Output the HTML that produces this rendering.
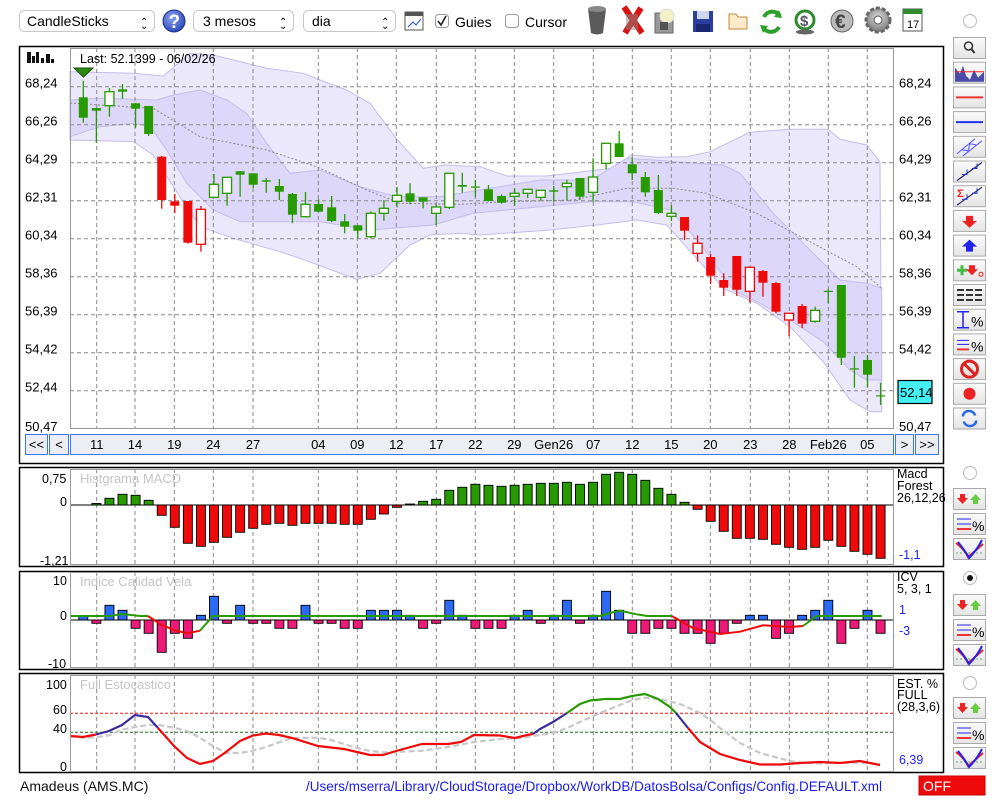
<!DOCTYPE html>
<html><head><meta charset="utf-8"><style>
html,body{margin:0;padding:0;background:#fff;width:1000px;height:800px;overflow:hidden}
svg{position:absolute;left:0;top:0;font-family:"Liberation Sans",sans-serif}
</style></head><body>
<svg id="s" width="1000" height="800" viewBox="0 0 1000 800" xmlns="http://www.w3.org/2000/svg">
<defs>
<linearGradient id="btn" x1="0" y1="0" x2="0" y2="1"><stop offset="0" stop-color="#fbfbfb"/><stop offset="1" stop-color="#e4e4e4"/></linearGradient>
<radialGradient id="help" cx="0.4" cy="0.35" r="0.7"><stop offset="0" stop-color="#8aa4f0"/><stop offset="1" stop-color="#2846b8"/></radialGradient>
<radialGradient id="gear" cx="0.5" cy="0.4" r="0.6"><stop offset="0" stop-color="#ddd"/><stop offset="1" stop-color="#777"/></radialGradient>
</defs>
<g font-size="14">
<rect x="19.5" y="10.5" width="135" height="21" rx="5" fill="#fff" stroke="#c8c8c8"/>
<text x="27" y="26">CandleSticks</text><text x="140" y="25" font-size="10">⌃</text><text x="140" y="29" font-size="10">⌄</text>
<circle cx="174" cy="21" r="11" fill="url(#help)" stroke="#1d2f8a"/><text x="168.5" y="28" fill="#fff" font-weight="bold" font-size="19">?</text>
<rect x="193.5" y="10.5" width="100" height="21" rx="5" fill="#fff" stroke="#c8c8c8"/>
<text x="203" y="26">3 mesos</text><text x="279" y="25" font-size="10">⌃</text><text x="279" y="29" font-size="10">⌄</text>
<rect x="303.5" y="10.5" width="92" height="21" rx="5" fill="#fff" stroke="#c8c8c8"/>
<text x="312" y="26">dia</text><text x="381" y="25" font-size="10">⌃</text><text x="381" y="29" font-size="10">⌄</text>
<rect x="405" y="12" width="18" height="18" fill="#fff" stroke="#555"/><rect x="405" y="12" width="18" height="4" fill="#555"/><path d="M408 27 L413 22 L416 25 L421 19" stroke="#2050d0" fill="none"/>
<rect x="435.5" y="14.5" width="13" height="13" rx="3" fill="#fff" stroke="#999"/><path d="M438 21 L441 25 L446 16" stroke="#222" stroke-width="1.6" fill="none"/>
<text x="455" y="27">Guies</text>
<rect x="505.5" y="14.5" width="13" height="13" rx="3" fill="#fff" stroke="#999"/>
<text x="525" y="27">Cursor</text>
</g>
<path d="M588 9 Q597 4 606 9 L603 33 Q597 36 591 33 Z" fill="#5a5a5a"/><ellipse cx="597" cy="9" rx="9" ry="3" fill="#888"/>
<path d="M624 7 L642 33 M641 8 L625 33" stroke="#d81010" stroke-width="6"/><rect x="626" y="14" width="12" height="16" fill="#888" opacity=".5"/>
<rect x="655" y="13" width="18" height="20" fill="#999" stroke="#666"/><circle cx="667" cy="16" r="7" fill="#f4f0c8" stroke="#ddd"/><rect x="660" y="22" width="8" height="8" fill="#555"/>
<rect x="693" y="11" width="20" height="21" fill="#2a3fa0"/><rect x="697" y="11" width="12" height="8" fill="#cfd6f0"/><rect x="696" y="24" width="14" height="8" fill="#1a2770"/>
<path d="M729 14 L736 14 L738 17 L747 17 L747 29 L729 29 Z" fill="#fbeacb" stroke="#c08a3a"/>
<path d="M764 17 A9 9 0 0 1 780 16 M779 27 A9 9 0 0 1 763 27" stroke="#2ca02c" stroke-width="4" fill="none"/><path d="M779 10 L782 18 L774 17 Z M763 33 L760 25 L768 26Z" fill="#2ca02c"/>
<circle cx="805" cy="20" r="9" fill="none" stroke="#2e8a2e" stroke-width="3"/><text x="800" y="26" font-size="15" font-weight="bold" fill="#556">$</text><ellipse cx="805" cy="32" rx="9" ry="2.5" fill="#666"/>
<circle cx="842" cy="21" r="11" fill="#bbb" stroke="#666"/><text x="835" y="28" font-size="19" font-weight="bold" fill="#444">€</text>
<circle cx="878" cy="20" r="12" fill="url(#gear)" stroke="#666" stroke-dasharray="4 2" stroke-width="3"/><circle cx="878" cy="20" r="4" fill="#fff" stroke="#555"/>
<rect x="903" y="9" width="19" height="22" fill="#fff" stroke="#555"/><rect x="903" y="9" width="19" height="5" fill="#2f8a2f"/><text x="907" y="28" font-size="11">17</text>
<circle cx="970" cy="21" r="6.5" fill="#fff" stroke="#bbb"/>

<g id="main"></g>
<g font-size="13" fill="#111">
<text x="20" y="791" font-size="14">Amadeus (AMS.MC)</text>
<text x="306" y="791" font-size="14" fill="#1a1aee" textLength="576" lengthAdjust="spacingAndGlyphs">/Users/mserra/Library/CloudStorage/Dropbox/WorkDB/DatosBolsa/Configs/Config.DEFAULT.xml</text>
</g>
<rect x="919" y="776" width="66" height="19" fill="#ee0a0a" stroke="#c00"/>
<text x="923" y="791" font-size="14" fill="#fff">OFF</text>
</svg>
<script>
var NS="http://www.w3.org/2000/svg",G=document.getElementById("main");
function el(t,a,txt){var e=document.createElementNS(NS,t);for(var k in a)e.setAttribute(k,a[k]);if(txt!=null)e.textContent=txt;G.appendChild(e);return e;}
function pts(a){return a.map(function(p){return p[0]+","+p[1]}).join(" ");}
var X=function(i){return 83.3+i*13.07;};
var gx=[96.7,135,174.3,213.3,253,318.3,357.3,396.3,436.3,475.3,514.3,553.7,593.3,632.3,671.3,710.3,750.3,789.3,828.3,867.3];
var gl=["11","14","19","24","27","04","09","12","17","22","29","Gen26","07","12","15","20","23","28","Feb26","05"];
[[46,463],[467,566],[571,669],[673,772]].forEach(function(p){el("rect",{x:19.5,y:p[0]+.5,width:924,height:p[1]-p[0],fill:"#fff",stroke:"#000","stroke-width":1.5});});
var ou=[[70,71.7],[133.3,73.3],[163.3,76],[190,53.3],[213.3,55],[266.7,68.3],[303.3,73.3],[320,80],[346.7,90],[370,103.3],[396.7,139],[423.3,168.3],[445,165],[480,166.7],[506.7,176],[546.7,176],[596.7,170],[613.3,168.3],[631.7,155],[656.7,157.3],[686.7,156.7],[710,151.7],[750,132.3],[790,129.3],[828,129.3],[840,139.3],[866.7,145],[880,161.7]];
var ol=[[70,140],[133.3,141.7],[153.3,155],[173.3,186.7],[200,226.7],[233.3,238.3],[280,251.7],[300,258.3],[356.7,279.3],[380,273.3],[410,245],[430,235],[460,233.3],[480,235],[550,230],[596.7,225],[636.7,220],[666.7,225],[723.3,288.3],[756.7,303.3],[790,326.7],[823.3,361.7],[850,400],[870,411.7],[881.7,411.7]];
var iu=[[70,100],[100,98.3],[156.7,100],[173.3,95],[200,90],[226.7,100],[246.7,113.3],[266.7,143.3],[290,173.3],[320,170],[360,186.7],[396.7,196.7],[440,196.7],[480,190],[540,180],[573.3,180],[596.7,176.7],[626.7,158.3],[653.3,160],[706.7,164],[723.3,165],[740,173.3],[773.3,213.3],[806.7,246.7],[840,280],[866.7,283.3],[881.7,288.3]];
var il=[[70,136.7],[100,126.7],[133.3,123.3],[150,126.7],[166.7,150],[186.7,183.3],[213.3,210],[240,221.7],[320,221.7],[370,230],[433.3,225],[473.3,213.3],[540,206.7],[590,201.7],[633.3,201.7],[670,210],[700,243.3],[733.3,290],[760,303.3],[790,320],[823.3,341.7],[850,370],[866.7,380],[881.7,380]];
el("polygon",{points:pts(ou.concat(ol.slice().reverse())),fill:"#ebe8fc",stroke:"#c4bdea"});
el("polygon",{points:pts(iu.concat(il.slice().reverse())),fill:"#ddd7f9",stroke:"#c4bdea"});
var ma=[[70,103],[126.7,106.7],[153.3,108.3],[200,136.7],[266.7,150],[316.7,166.7],[366.7,190],[400,203.3],[460,204.3],[506.7,201.7],[573.3,200],[626.7,188.3],[673.3,188.3],[706.7,193.3],[756.7,213.3],[806.7,240],[856.7,266.7],[881.7,288.3]];
el("polyline",{points:pts(ma),fill:"none",stroke:"#888","stroke-dasharray":"2 2"});
for(var k=0;k<9;k++){var y=86.7+38*k;el("line",{x1:70,x2:893,y1:y,y2:y,stroke:"#888","stroke-dasharray":"4 3"});}
function vgrid(t,b){gx.forEach(function(x){el("line",{x1:x,x2:x,y1:t,y2:b,stroke:"#888","stroke-dasharray":"4 3"});});}
vgrid(48,428);
el("rect",{x:70.5,y:48.5,width:823,height:380,fill:"none",stroke:"#999"});
var pl=["68,24","66,26","64,29","62,31","60,34","58,36","56,39","54,42","52,44"];
pl.forEach(function(t,k){var y=86.7+38*k+1;el("text",{x:25,y:y,"font-size":13},t);if(k<8)el("text",{x:899,y:y,"font-size":13},t);});
el("text",{x:25,y:431,"font-size":13},"50,47");el("text",{x:899,y:431,"font-size":13},"50,47");
var C=[[80.7,122.7,97.3,117.7,'g'],[108,142.7,108,110.7,'g'],[88,116.7,91.7,105.7,'gw'],[84,98.7,89.3,91.7,'g'],[103,128,103.3,108.7,'g'],[106,136,106,134,'g'],[156,208.7,156.7,200,'r'],[194,213,201.3,205.7,'r'],[201,243.7,201,242.7,'r'],[206,251.7,209.3,244.3,'rw'],[174,197,184.3,197.3,'gw'],[177,205.7,177.3,193.3,'gw'],[171,196.7,171.3,174.7,'g'],[173.3,188,173.3,184.7,'g'],[178,192.7,180.3,181.7,'g'],[179,200,186,191.7,'g'],[193,223.3,194,214.7,'g'],[192,217.3,204.3,216.7,'gw'],[199.3,212.3,204,211.7,'g'],[196,222,207.3,221,'g'],[214,233.3,221.3,226.7,'g'],[225,238.3,225.3,230.7,'g'],[211.3,238.3,213.3,236.7,'gw'],[200,220.7,208.3,213.3,'gw'],[187,207.3,195.3,201.3,'gw'],[183.3,204.3,193.3,201.7,'g'],[197.3,208.3,197.3,201.7,'g'],[204.3,225,207,213.3,'gw'],[173.3,209,173.3,207.3,'gw'],[172.7,192.7,185,186.7,'g'],[180,196.7,186.5,187.5,'g'],[185,201.7,189.3,201,'g'],[194.3,203.7,196,202.7,'g'],[188.3,205.7,193.3,196.3,'gw'],[189.3,198,189.3,193.3,'gw'],[190.3,200.3,190.3,197.3,'gw'],[186,201.7,190.3,191.7,'g'],[179.7,200,183.3,186.7,'gw'],[178,200,178,196.7,'g'],[158.3,201.7,177,192.3,'gw'],[143.3,169.3,143.3,163.3,'gw'],[131,157.3,143.3,157,'g'],[157.3,180,164.3,173.3,'g'],[172,196.7,177,192.3,'g'],[175,214,190,213,'g'],[205.3,221,213.3,216.3,'gw'],[217,240,217,230.7,'r'],[235.3,261.7,243.3,253.3,'rw'],[254.3,284,257,275.7,'r'],[273.3,296,280,287.7,'r'],[256,296,256,289.7,'r'],[266.7,302.7,267.3,291.3,'rw'],[270,296.7,271,282.7,'r'],[282,313.3,283,311.7,'r'],[313.3,336,313.3,320,'rw'],[304,328,306,323.7,'r'],[306.7,322.7,310.3,321.3,'gw'],[289,303.3,290.8,291.8,'g'],[285,365,285,357.7,'g'],[356,387.7,368.3,369.3,'g'],[355,387.3,360,374.7,'g'],[382.7,405,395.3,396,'g']];
var GR="#279a00",RD="#ee0a0a";
C.forEach(function(c,i){var x=X(i),col=c[4][0]=='g'?GR:RD,h=c[4].length>1;
 el("line",{x1:x,x2:x,y1:c[0],y2:c[1],stroke:col,"stroke-width":1.3});
 var bh=Math.max(c[3]-c[2],1.2);
 el("rect",{x:x-4.5,y:c[2],width:9,height:bh,fill:h?"#fff":col,stroke:col,"stroke-width":h?1.3:0});
});
el("polygon",{points:"74,68 93,68 83.5,77",fill:"#2a8a10",stroke:"#185008"});
el("text",{x:80,y:63,"font-size":12.5},"Last: 52.1399 - 06/02/26");
[[27,52,4,11],[32,56,3,7],[36,52,3,11],[41,58,3,5],[46,54,4,9],[51,59,3,4]].forEach(function(r){el("rect",{x:r[0],y:r[1],width:r[2],height:r[3],fill:"#111"});});
el("rect",{x:898,y:380.5,width:34,height:23,fill:"#44f0f4",stroke:"#000","stroke-width":1.2});
el("text",{x:900,y:397,"font-size":13},"52,14");
el("rect",{x:70.5,y:434.5,width:823,height:20,fill:"#eceef3",stroke:"#3b78f0"});
[[25.5,22,"<<"],[49.5,19,"<"],[895.5,18,">"],[915.5,23,">>"]].forEach(function(b){el("rect",{x:b[0],y:434.5,width:b[1],height:20,fill:"#eceef3",stroke:"#3b78f0"});el("text",{x:b[0]+b[1]/2,y:449,"font-size":13,"text-anchor":"middle"},b[2]);});
gx.forEach(function(x,i){el("text",{x:x,y:449,"font-size":13,"text-anchor":"middle"},gl[i]);});
vgrid(469,564);
var M=[505,503.5,498.3,494.3,495.3,500.3,515.3,527.3,543.3,546.3,542.3,537.3,532.3,528.3,524.3,523.3,525.3,523.3,523.3,523.3,524.3,524.3,519.3,514,507.3,504,501.3,499.3,490.3,487.3,484.3,485.3,486.3,485.3,484.3,483.3,483.3,482.3,484.3,482.3,474.3,472.3,474.3,480.3,488.3,494.3,502.3,509.3,521.3,531.3,538.3,538.3,539.3,544.3,547.3,549.3,547.3,540.3,546.3,551.3,554.3,558.3];
M.forEach(function(v,i){if(i==0)return;var x=X(i),t=Math.min(v,505),b=Math.max(v,505);el("rect",{x:x-4.5,y:t,width:9,height:Math.max(b-t,1),fill:v<505?GR:RD,stroke:"#000","stroke-width":.9});});
el("line",{x1:70,x2:893,y1:505,y2:505,stroke:"#000"});
el("rect",{x:70.5,y:469.5,width:823,height:95,fill:"none",stroke:"#999"});
el("text",{x:80,y:483,"font-size":13,fill:"#c4c4c4"},"Histgrama MACD");
el("text",{x:42,y:483,"font-size":12.5},"0,75");el("text",{x:60,y:506,"font-size":12.5},"0");el("text",{x:40,y:565,"font-size":12.5},"-1,21");
el("text",{x:897,y:478,"font-size":12.5},"Macd");el("text",{x:897,y:490,"font-size":12.5},"Forest");el("text",{x:897,y:502,"font-size":12.5},"26,12,26");
el("text",{x:899,y:559,"font-size":12.5,fill:"#2222ee"},"-1,1");
vgrid(572,667);
var I=[[616,'b'],[623.3,'p'],[605.3,'b'],[610.3,'b'],[628.3,'p'],[633.3,'p'],[652.3,'p'],[633.3,'p'],[638.3,'p'],[615.3,'b'],[596.3,'b'],[623.3,'p'],[605.3,'b'],[623.3,'p'],[623.3,'p'],[628.3,'p'],[628.3,'p'],[605.3,'b'],[623.3,'p'],[623.3,'p'],[628.3,'p'],[628.3,'p'],[610.3,'b'],[610.3,'b'],[610.3,'b'],[615.3,'b'],[628.3,'p'],[623.3,'p'],[600.3,'b'],[615.3,'b'],[628.3,'p'],[628.3,'p'],[628.3,'p'],[615.3,'b'],[610.3,'b'],[623.3,'p'],[615.3,'b'],[600.3,'b'],[623.3,'p'],[615.3,'b'],[591.3,'b'],[610.3,'b'],[633.3,'p'],[633.3,'p'],[628.3,'p'],[628.3,'p'],[633.3,'p'],[633.3,'p'],[643.3,'p'],[633.3,'p'],[623.3,'p'],[615.3,'b'],[615.3,'b'],[638.3,'p'],[633.3,'p'],[615.3,'b'],[610.3,'b'],[600.3,'b'],[643.3,'p'],[628.3,'p'],[610.3,'b'],[633.3,'p']];
I.forEach(function(v,i){var x=X(i),t=Math.min(v[0],620),b=Math.max(v[0],620);el("rect",{x:x-4.5,y:t,width:9,height:b-t,fill:v[1]=='b'?"#2a6af5":"#ee1a78",stroke:"#000","stroke-width":.9});});
el("line",{x1:70,x2:893,y1:620,y2:620,stroke:"#000"});
var gL=[[70,616],[110,616],[122,614],[140,616],[148,616]],rL=[[148,616],[160,624],[174,630],[187,633.3],[200,630.7]],gL2=[[200,630.7],[213,616],[600,616],[610,613],[620,610.7],[635,614],[647,616],[671.7,616]],rL2=[[671.7,616],[693,628],[720,634],[740,631.7],[763,625.3],[790,627],[803,626]],gL3=[[803,626],[816.7,616],[881.7,616]];
[[gL,GR],[rL,RD],[gL2,GR],[rL2,RD],[gL3,GR]].forEach(function(l){el("polyline",{points:pts(l[0]),fill:"none",stroke:l[1],"stroke-width":2});});
el("rect",{x:70.5,y:572.5,width:823,height:95,fill:"none",stroke:"#999"});
el("text",{x:80,y:586,"font-size":13,fill:"#c4c4c4"},"Indice Calidad Vela");
el("text",{x:53,y:585,"font-size":12.5},"10");el("text",{x:60,y:620,"font-size":12.5},"0");el("text",{x:48,y:668,"font-size":12.5},"-10");
el("text",{x:897,y:581,"font-size":12.5},"ICV");el("text",{x:897,y:593,"font-size":12.5},"5, 3, 1");
el("text",{x:899,y:614,"font-size":12.5,fill:"#2222ee"},"1");el("text",{x:899,y:635,"font-size":12.5,fill:"#2222ee"},"-3");
vgrid(675,771);
el("line",{x1:70,x2:893,y1:713.3,y2:713.3,stroke:"#ee1111","stroke-dasharray":"3 2"});
el("line",{x1:70,x2:893,y1:732.3,y2:732.3,stroke:"#1a6a1a","stroke-dasharray":"3 2"});
var gs=[[70,736],[83,737.7],[96,737.3],[109,735.3],[122,729.7],[135,727],[148,725],[161,725.3],[174,727.7],[187,731],[200,737.7],[213,746],[226,753],[240,753],[253,750.7],[266,747],[279,742.3],[292,738],[318,737.7],[331,740],[344,744],[357,748],[370,751],[383,752.3],[396,752],[422,750.7],[448,747],[474,742],[500,739],[520,738],[540,735],[553,733],[567,728],[580,722],[600,713],[620,705],[632,700],[645,697.7],[660,699],[680,704],[700,713],[713,722],[720,728],[740,743],[760,753],[775,757],[790,761],[800,762.5],[820,763.5],[850,762.5],[880,763.7]];
el("polyline",{points:pts(gs),fill:"none",stroke:"#c8c8c8","stroke-width":2.2,"stroke-dasharray":"6 3"});
var S=[[[[70,736],[83,737],[96,734.5]],RD],[[[96,734.5],[109,731],[122,725],[135,715],[148,717],[158,728]],"#3a2a9a"],[[[158,728],[174,746],[187,758],[200,764],[213,761],[226,752],[240,741],[253,735.5],[266,733.5],[279,735],[292,738],[318,746],[344,749],[357,752],[370,755],[383,755],[396,751],[422,744],[448,744],[461,742],[474,735],[500,735.5],[515,738],[527,735],[533,734]],RD],[[[533,734],[540,729],[553,722],[567,713]],"#3a2a9a"],[[[567,713],[580,704],[590,700.5],[605,699],[620,699],[632,696],[645,694],[658,699],[670,707],[676,713]],GR],[[[676,713],[688,728]],"#3a2a9a"],[[[688,728],[700,742],[720,754],[740,760],[760,764.5],[780,764.5],[800,763],[820,762],[840,763],[850,762],[860,761],[870,763],[880,765]],RD]];
S.forEach(function(s){el("polyline",{points:pts(s[0]),fill:"none",stroke:s[1],"stroke-width":2.2});});
el("rect",{x:70.5,y:675.5,width:823,height:96,fill:"none",stroke:"#999"});
el("text",{x:80,y:689,"font-size":13,fill:"#c4c4c4"},"Full Estocastico");
el("text",{x:46,y:689,"font-size":12.5},"100");el("text",{x:53,y:714,"font-size":12.5},"60");el("text",{x:53,y:733,"font-size":12.5},"40");el("text",{x:60,y:771,"font-size":12.5},"0");
el("text",{x:897,y:688,"font-size":12.5},"EST. %");el("text",{x:897,y:699,"font-size":12.5},"FULL");el("text",{x:897,y:711,"font-size":12.5},"(28,3,6)");
el("text",{x:899,y:764,"font-size":12.5,fill:"#2222ee"},"6,39");
function btn(y){el("rect",{x:953.5,y:y+.5,width:32,height:21,fill:"url(#btn)",stroke:"#aaa"});}
var bi=["mag","vol","rl","bl","ch","ln","sg","rd","bu","pr","eq","ip","ep","no","rc","rf"];
bi.forEach(function(t,k){var y=37+k*24.7,cx=969.5,cy=y+11;btn(y);
 if(t=="mag"){el("circle",{cx:cx-1,cy:cy-2,r:4,fill:"none",stroke:"#333","stroke-width":1.5});el("line",{x1:cx+2,y1:cy+1,x2:cx+5,y2:cy+5,stroke:"#333","stroke-width":2});}
 if(t=="vol"){el("path",{d:"M955 "+(y+20)+" L955 "+(y+6)+" L960 "+(y+12)+" L963 "+(y+4)+" L966 "+(y+14)+" L970 "+(y+18)+" L974 "+(y+8)+" L978 "+(y+16)+" L984 "+(y+10)+" L984 "+(y+20)+"Z",fill:"#4a4aa8"});el("line",{x1:955,x2:984,y1:y+10,y2:y+10,stroke:"#e22"});}
 if(t=="rl")el("line",{x1:956,x2:983,y1:cy,y2:cy,stroke:"#e33","stroke-width":2});
 if(t=="bl")el("line",{x1:956,x2:983,y1:cy,y2:cy,stroke:"#23e","stroke-width":2});
 if(t=="ch")el("path",{d:"M957 "+(y+18)+" L975 "+(y+3)+" M963 "+(y+20)+" L982 "+(y+5)+" M962 "+(y+14)+" L968 "+(y+15)+" L970 "+(y+8)+" L976 "+(y+9),stroke:"#55f",fill:"none"});
 if(t=="ln"||t=="sg"){el("path",{d:"M957 "+(y+20)+" L982 "+(y+2),stroke:"#226",fill:"none","stroke-width":1.2});el("path",{d:"M962 "+(y+14)+" l5 0 l0 -5 M972 "+(y+8)+" l5 0 l0 -5",stroke:"#23c",fill:"none"});if(t=="sg")el("text",{x:957,y:y+12,"font-size":11,fill:"#e22","font-weight":"bold"},"Σ");}
 if(t=="rd")el("path",{d:"M966 "+(y+6)+" h7 v5 h4 l-7.5 7 l-7.5 -7 h4z",fill:"#e22"});
 if(t=="bu")el("path",{d:"M966 "+(y+17)+" h7 v-5 h4 l-7.5 -7 l-7.5 7 h4z",fill:"#22e"});
 if(t=="pr"){el("path",{d:"M957 "+cy+" h10 M962 "+(cy-5)+" v10",stroke:"#4b4","stroke-width":3});el("path",{d:"M969 "+(y+6)+" h6 v4 h3 l-6 6 l-6 -6 h3z",fill:"#e22"});el("circle",{cx:981,cy:cy+4,r:2,fill:"none",stroke:"#e22"});}
 if(t=="eq")[0,5,10].forEach(function(d){el("path",{d:"M957 "+(y+6+d)+" h26",stroke:"#333","stroke-width":2,"stroke-dasharray":"7 2"});});
 if(t=="ip"){el("path",{d:"M957 "+(y+3)+" h12 M957 "+(y+19)+" h12 M963 "+(y+3)+" v16",stroke:"#22e","stroke-width":1.5});el("text",{x:971,y:y+18,"font-size":14},"%");}
 if(t=="ep"){el("path",{d:"M957 "+(y+7)+" h12 M957 "+(y+11)+" h12",stroke:"#22e"});el("path",{d:"M957 "+(y+16)+" h12",stroke:"#e33","stroke-width":2});el("text",{x:971,y:y+18,"font-size":14},"%");}
 if(t=="no"){el("circle",{cx:cx,cy:cy,r:8,fill:"#e8e8e8",stroke:"#d22","stroke-width":3});el("line",{x1:cx-5,y1:cy-5,x2:cx+5,y2:cy+5,stroke:"#d22","stroke-width":3});}
 if(t=="rc")el("circle",{cx:cx,cy:cy,r:6,fill:"#ee2222"});
 if(t=="rf")el("path",{d:"M963 "+(cy-2)+" A6 5 0 0 1 975 "+(cy-3)+" M976 "+(cy+2)+" A6 5 0 0 1 964 "+(cy+3),stroke:"#2a6ae0","stroke-width":2.5,fill:"none"});
});
function sub(ry,by){el("circle",{cx:970,cy:ry,r:6.5,fill:"#fff",stroke:"#bbb"});
 var ys=[by,by+25,by+50];
 ys.forEach(function(y,k){el("rect",{x:953.5,y:y+.5,width:32,height:21,fill:"url(#btn)",stroke:"#aaa"});
  if(k==0){el("path",{d:"M960 "+(y+6)+" h5 v4 h3 l-5.5 6 l-5.5 -6 h3z",fill:"#e22"});el("path",{d:"M973 "+(y+16)+" h5 v-4 h3 l-5.5 -6 l-5.5 6 h3z",fill:"#6c4"});}
  if(k==1){el("path",{d:"M957 "+(y+6)+" h14 M957 "+(y+11)+" h14",stroke:"#22e"});el("path",{d:"M957 "+(y+16)+" h14",stroke:"#e33","stroke-width":2});el("text",{x:972,y:y+18,"font-size":14},"%");}
  if(k==2){el("line",{x1:956,x2:984,y1:y+15,y2:y+15,stroke:"#6a6","stroke-dasharray":"2 2"});el("path",{d:"M956 "+(y+5)+" Q965 "+(y+12)+" 968 "+(y+19)+" Q974 "+(y+14)+" 983 "+(y+6),stroke:"#e22","stroke-width":2,fill:"none"});el("path",{d:"M958 "+(y+4)+" Q966 "+(y+14)+" 969 "+(y+20)+" Q977 "+(y+12)+" 982 "+(y+2),stroke:"#22e","stroke-width":2,fill:"none"});}
 });}
sub(473,488);sub(578,594);sub(683,697);
el("circle",{cx:970,cy:578,r:3,fill:"#111"});
</script>
</body></html>
